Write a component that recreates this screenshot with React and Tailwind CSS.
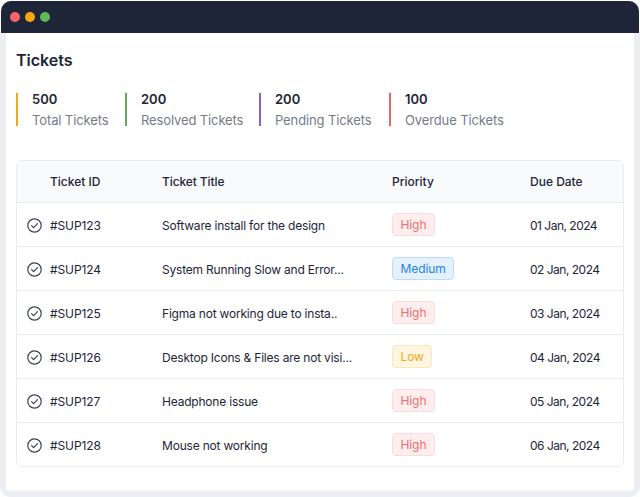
const stats = [
  { value: "500", label: "Total Tickets", bar: "bg-[#f0a91c]", width: "w-[109px]" },
  { value: "200", label: "Resolved Tickets", bar: "bg-[#63a95c]", width: "w-[134px]" },
  { value: "200", label: "Pending Tickets", bar: "bg-[#8f5fc9]", width: "w-[130px]" },
  { value: "100", label: "Overdue Tickets", bar: "bg-[#dd6b66]", width: "w-[130px]" },
];

const tickets = [
  { id: "#SUP123", title: "Software install for the design", priority: "High", date: "01 Jan, 2024" },
  { id: "#SUP124", title: "System Running Slow and Error...", priority: "Medium", date: "02 Jan, 2024" },
  { id: "#SUP125", title: "Figma not working due to insta..", priority: "High", date: "03 Jan, 2024" },
  { id: "#SUP126", title: "Desktop Icons & Files are not visi...", priority: "Low", date: "04 Jan, 2024" },
  { id: "#SUP127", title: "Headphone issue", priority: "High", date: "05 Jan, 2024" },
  { id: "#SUP128", title: "Mouse not working", priority: "High", date: "06 Jan, 2024" },
];

const badgeStyles = {
  High: "bg-[#fdeded] border-[#fbdcdc] text-[#ea7173]",
  Medium: "bg-[#e4f1fd] border-[#bcdcf7] text-[#1f84e0]",
  Low: "bg-[#fef6e0] border-[#fbe8b8] text-[#eeaa1f]",
};

function CheckIcon() {
  return (
    <svg width="15" height="15" viewBox="0 0 15 15" fill="none" stroke="#3d4350" strokeWidth="1.2" strokeLinecap="round" strokeLinejoin="round">
      <circle cx="7.5" cy="7.5" r="6.7" />
      <path d="M4.6 7.7l2 2 3.9-4.1" />
    </svg>
  );
}

export default function App() {
  return (
    <div className="w-[640px] h-[497px] bg-white font-['Inter',sans-serif] text-[#1e2538]">
      <div className="h-full flex flex-col">
        <div className="mt-px mx-px h-8 bg-[#1e2538] rounded-t-[10px] flex items-center gap-[5px] pl-[9px]">
          <span className="w-[10px] h-[10px] rounded-full bg-[#fb6467]"></span>
          <span className="w-[10px] h-[10px] rounded-full bg-[#f9a60f]"></span>
          <span className="w-[10px] h-[10px] rounded-full bg-[#5fb75a]"></span>
        </div>
        <div className="flex-1 border-x-[6px] border-b-[6px] border-[#eceef3] rounded-b-[10px] bg-white pt-[17px] px-[10px]">
          <h1 className="text-base font-semibold leading-5">Tickets</h1>
          <div className="flex mt-[23px]">
            {stats.map((s) => (
              <div key={s.label} className={`flex shrink-0 ${s.width}`}>
                <div className={`w-0.5 h-[33px] ${s.bar}`}></div>
                <div className="ml-3.5 -mt-0.5">
                  <div className="text-[13px] leading-4 font-semibold">{s.value}</div>
                  <div className="text-[13px] leading-4 mt-[5px] tracking-[-0.12px] text-[#757b8a] whitespace-nowrap">{s.label}</div>
                </div>
              </div>
            ))}
          </div>
          <div className="mt-8 border border-[#e9edf2] rounded-md overflow-hidden text-[12px]">
            <div className="h-[41px] bg-[#f8fafb] grid grid-cols-[33px_112px_230px_138px_1fr] items-center font-medium">
              <div></div>
              <div>Ticket ID</div>
              <div className="tracking-[-0.1px]">Ticket Title</div>
              <div>Priority</div>
              <div>Due Date</div>
            </div>
            {tickets.map((t) => (
              <div key={t.id} className="h-11 border-t border-[#e9edf2] grid grid-cols-[33px_112px_230px_138px_1fr] items-center">
                <div className="pl-[10px] pt-0.5 flex"><CheckIcon /></div>
                <div className="pt-0.5 tracking-[-0.1px]">{t.id}</div>
                <div className="pt-0.5 whitespace-nowrap tracking-[-0.2px]">{t.title}</div>
                <div className="flex">
                  <span className={`h-[23px] px-[7.5px] flex items-center border rounded tracking-[-0.1px] ${badgeStyles[t.priority]}`}>{t.priority}</span>
                </div>
                <div className="pt-0.5 tracking-[-0.5px]">{t.date}</div>
              </div>
            ))}
          </div>
        </div>
      </div>
    </div>
  );
}
